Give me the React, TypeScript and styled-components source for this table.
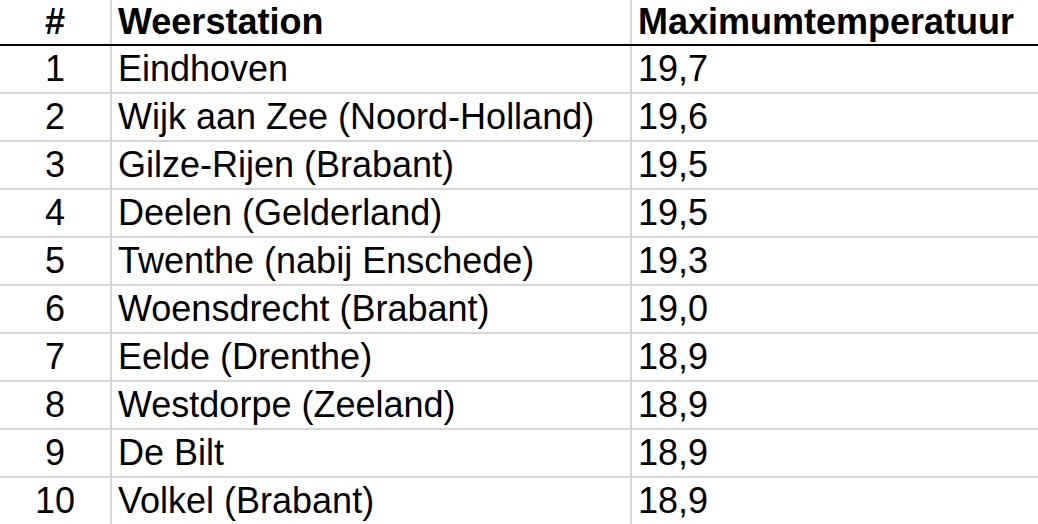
import React from 'react';
import styled, { createGlobalStyle } from 'styled-components';

const GlobalStyle = createGlobalStyle`
  html, body {
    margin: 0;
    padding: 0;
    background: #fff;
  }
  body {
    font-family: "Liberation Sans", Arial, sans-serif;
    color: #000;
    overflow: hidden;
  }
`;

const Table = styled.table`
  width: 1038px;
  border-collapse: collapse;
  table-layout: fixed;
  font-size: 36px;
  line-height: 1;
`;

const HeadCell = styled.th<{ $center?: boolean }>`
  height: 44px;
  padding: 0 6px;
  font-weight: 700;
  text-align: ${(p) => (p.$center ? 'center' : 'left')};
  vertical-align: middle;
  border-bottom: 2px solid #000;
  & + & {
    border-left: 2px solid #d6d6d6;
  }
`;

const Row = styled.tr`
  & + & td {
    border-top: 2px solid #d6d6d6;
  }
`;

const Cell = styled.td<{ $center?: boolean }>`
  height: 46px;
  padding: 0 6px;
  text-align: ${(p) => (p.$center ? 'center' : 'left')};
  vertical-align: middle;
  white-space: nowrap;
  & + & {
    border-left: 2px solid #d6d6d6;
  }
`;

type Station = { rank: number; name: string; max: string };

const stations: Station[] = [
  { rank: 1, name: 'Eindhoven', max: '19,7' },
  { rank: 2, name: 'Wijk aan Zee (Noord-Holland)', max: '19,6' },
  { rank: 3, name: 'Gilze-Rijen (Brabant)', max: '19,5' },
  { rank: 4, name: 'Deelen (Gelderland)', max: '19,5' },
  { rank: 5, name: 'Twenthe (nabij Enschede)', max: '19,3' },
  { rank: 6, name: 'Woensdrecht (Brabant)', max: '19,0' },
  { rank: 7, name: 'Eelde (Drenthe)', max: '18,9' },
  { rank: 8, name: 'Westdorpe (Zeeland)', max: '18,9' },
  { rank: 9, name: 'De Bilt', max: '18,9' },
  { rank: 10, name: 'Volkel (Brabant)', max: '18,9' },
];

const App = () => {
  return (
    <>
      <GlobalStyle />
      <Table>
        <colgroup>
          <col style={{ width: 111 }} />
          <col style={{ width: 520 }} />
          <col />
        </colgroup>
        <thead>
          <tr>
            <HeadCell $center>#</HeadCell>
            <HeadCell>Weerstation</HeadCell>
            <HeadCell>Maximumtemperatuur</HeadCell>
          </tr>
        </thead>
        <tbody>
          {stations.map((s) => (
            <Row key={s.rank}>
              <Cell $center>{s.rank}</Cell>
              <Cell>{s.name}</Cell>
              <Cell>{s.max}</Cell>
            </Row>
          ))}
        </tbody>
      </Table>
    </>
  );
};

export default App;
